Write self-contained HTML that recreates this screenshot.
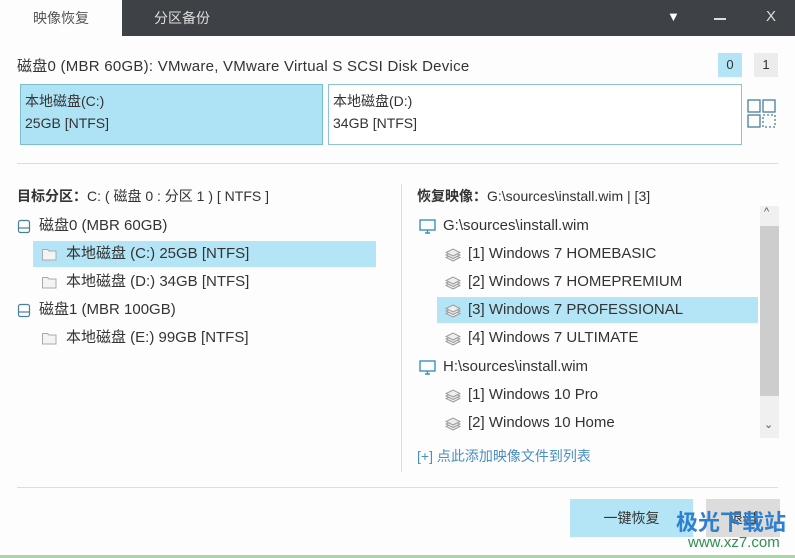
<!DOCTYPE html>
<html><head><meta charset="utf-8"><style>
*{margin:0;padding:0;box-sizing:border-box}
body{width:795px;height:558px;background:#fdfdfd;font-family:"Liberation Sans","Noto Sans CJK SC",sans-serif;color:#333;position:relative;overflow:hidden;font-size:15px}
.a{position:absolute;white-space:nowrap}
.bar{left:0;top:0;width:795px;height:36px;background:#3e4246}
.tab1{left:0;top:0;width:122px;height:36px;background:#fdfdfd;color:#555;font-size:14px;line-height:36px;text-align:center}
.tab2{left:122px;top:0;width:120px;line-height:36px;text-align:center;color:#ddd;font-size:14px}
.row{height:26px;line-height:26px;font-size:15px}
.sel{background:#b4e5f6}
.ic{display:inline-block;vertical-align:middle;margin-right:8px}
</style></head><body>
<div class="a bar"></div>
<div class="a tab1">映像恢复</div>
<div class="a tab2">分区备份</div>
<div class="a" style="left:667px;top:9px;color:#fff;font-size:13px">▼</div>
<div class="a" style="left:714px;top:18px;width:12px;height:2px;background:#ddd"></div>
<div class="a" style="left:766px;top:8px;color:#ddd;font-size:15px">X</div>

<div class="a" style="left:17px;top:55px;font-size:15px;letter-spacing:0.25px">磁盘0 (MBR 60GB): VMware, VMware Virtual S SCSI Disk Device</div>
<div class="a" style="left:718px;top:53px;width:24px;height:24px;background:#b4e5f6;text-align:center;line-height:24px;font-size:13px">0</div>
<div class="a" style="left:754px;top:53px;width:24px;height:24px;background:#ececec;text-align:center;line-height:24px;font-size:13px">1</div>
<div class="a" style="left:20px;top:84px;width:303px;height:61px;background:#aee3f5;border:1px solid #7bbfcc;padding:5px 4px;line-height:22px;font-size:14px">本地磁盘(C:)<br>25GB [NTFS]</div>
<div class="a" style="left:328px;top:84px;width:414px;height:61px;background:#fff;border:1px solid #8cc5cf;padding:5px 4px;line-height:22px;font-size:14px">本地磁盘(D:)<br>34GB [NTFS]</div>
<svg class="a" style="left:747px;top:99px" width="32" height="32"><g fill="none" stroke="#4a7f9a" stroke-width="1.3"><rect x="1" y="1" width="12" height="12"/><rect x="16" y="1" width="12" height="12"/><rect x="1" y="16" width="12" height="12"/><rect x="16" y="16" width="12" height="12" stroke-dasharray="2 2"/></g></svg>
<div class="a" style="left:17px;top:163px;width:761px;height:1px;background:#ddd"></div>

<div class="a" style="left:17px;top:186px;font-size:14px"><b>目标分区：</b>C: ( 磁盘 0 : 分区 1 ) [ NTFS ]</div>
<div class="a" style="left:401px;top:184px;width:1px;height:288px;background:#ddd"></div>
<svg width="0" height="0" style="position:absolute"><defs>
<g id="hd"><rect x="1.5" y="1.5" width="11" height="12" rx="2" fill="none" stroke="#4a7f9a" stroke-width="1.2"/><line x1="1.5" y1="9" x2="12.5" y2="9" stroke="#4a7f9a" stroke-width="1.2"/></g>
<g id="fd"><path d="M1.5 3.5h5l1.5 1.5h7v9h-13.5z" fill="#f4f4f4" stroke="#aaa"/></g>
<g id="pc"><rect x="1" y="2" width="15" height="10" fill="none" stroke="#3f8fc0" stroke-width="1.4"/><path d="M6 15h5M8.5 12v3" stroke="#3f8fc0" stroke-width="1.4"/></g>
<g id="ly" fill="#eee" stroke="#999" stroke-width="1"><path d="M8 10l7-3.5-7-3.5-7 3.5z" transform="translate(0,5)"/><path d="M8 10l7-3.5-7-3.5-7 3.5z" transform="translate(0,2.5)"/><path d="M8 10l7-3.5-7-3.5-7 3.5z"/></g>
</defs></svg>
<div class="a row" style="left:17px;top:213px"><svg class="ic" width="14" height="15"><use href="#hd"/></svg>磁盘0 (MBR 60GB)</div>
<div class="a row sel" style="left:33px;top:241px;width:343px;padding-left:8px"><svg class="ic" width="17" height="16"><use href="#fd"/></svg>本地磁盘 (C:) 25GB [NTFS]</div>
<div class="a row" style="left:41px;top:269px"><svg class="ic" width="17" height="16"><use href="#fd"/></svg>本地磁盘 (D:) 34GB [NTFS]</div>
<div class="a row" style="left:17px;top:297px"><svg class="ic" width="14" height="15"><use href="#hd"/></svg>磁盘1 (MBR 100GB)</div>
<div class="a row" style="left:41px;top:325px"><svg class="ic" width="17" height="16"><use href="#fd"/></svg>本地磁盘 (E:) 99GB [NTFS]</div>

<div class="a" style="left:417px;top:186px;font-size:14px"><b>恢复映像：</b>G:\sources\install.wim | [3]</div>
<div class="a row" style="left:419px;top:213px"><svg class="ic" width="17" height="16" style="margin-right:7px"><use href="#pc"/></svg>G:\sources\install.wim</div>
<div class="a row" style="left:445px;top:241px"><svg class="ic" width="16" height="16" style="margin-right:7px"><use href="#ly"/></svg>[1] Windows 7 HOMEBASIC</div>
<div class="a row" style="left:445px;top:269px"><svg class="ic" width="16" height="16" style="margin-right:7px"><use href="#ly"/></svg>[2] Windows 7 HOMEPREMIUM</div>
<div class="a row sel" style="left:437px;top:297px;width:321px;padding-left:8px"><svg class="ic" width="16" height="16" style="margin-right:7px"><use href="#ly"/></svg>[3] Windows 7 PROFESSIONAL</div>
<div class="a row" style="left:445px;top:325px"><svg class="ic" width="16" height="16" style="margin-right:7px"><use href="#ly"/></svg>[4] Windows 7 ULTIMATE</div>
<div class="a row" style="left:419px;top:354px"><svg class="ic" width="17" height="16" style="margin-right:7px"><use href="#pc"/></svg>H:\sources\install.wim</div>
<div class="a row" style="left:445px;top:382px"><svg class="ic" width="16" height="16" style="margin-right:7px"><use href="#ly"/></svg>[1] Windows 10 Pro</div>
<div class="a row" style="left:445px;top:410px"><svg class="ic" width="16" height="16" style="margin-right:7px"><use href="#ly"/></svg>[2] Windows 10 Home</div>
<div class="a" style="left:760px;top:206px;width:19px;height:232px;background:#f0f0f0"></div>
<div class="a" style="left:760px;top:226px;width:19px;height:170px;background:#cdcdcd"></div>
<div class="a" style="left:764px;top:206px;font-size:11px;color:#555">^</div>
<div class="a" style="left:764px;top:418px;font-size:11px;color:#555">⌄</div>
<div class="a" style="left:417px;top:446px;font-size:14px;color:#4a8fbf">[+] 点此添加映像文件到列表</div>
<div class="a" style="left:17px;top:487px;width:761px;height:1px;background:#ddd"></div>

<div class="a" style="left:570px;top:499px;width:123px;height:38px;background:#b4e5f6;text-align:center;line-height:38px;font-size:14px">一键恢复</div>
<div class="a" style="left:706px;top:499px;width:74px;height:38px;background:#dcdcdc;text-align:center;line-height:38px;font-size:14px">退出</div>
<div class="a" style="left:676px;top:505px;font-size:22px;font-weight:bold;color:#2f7fd0">极光下载站</div>
<div class="a" style="left:688px;top:534px;font-size:15px;color:#2f8f50">www.xz7.com</div>
<div class="a" style="left:0;top:555px;width:795px;height:3px;background:#a8d8a8"></div>
</body></html>
